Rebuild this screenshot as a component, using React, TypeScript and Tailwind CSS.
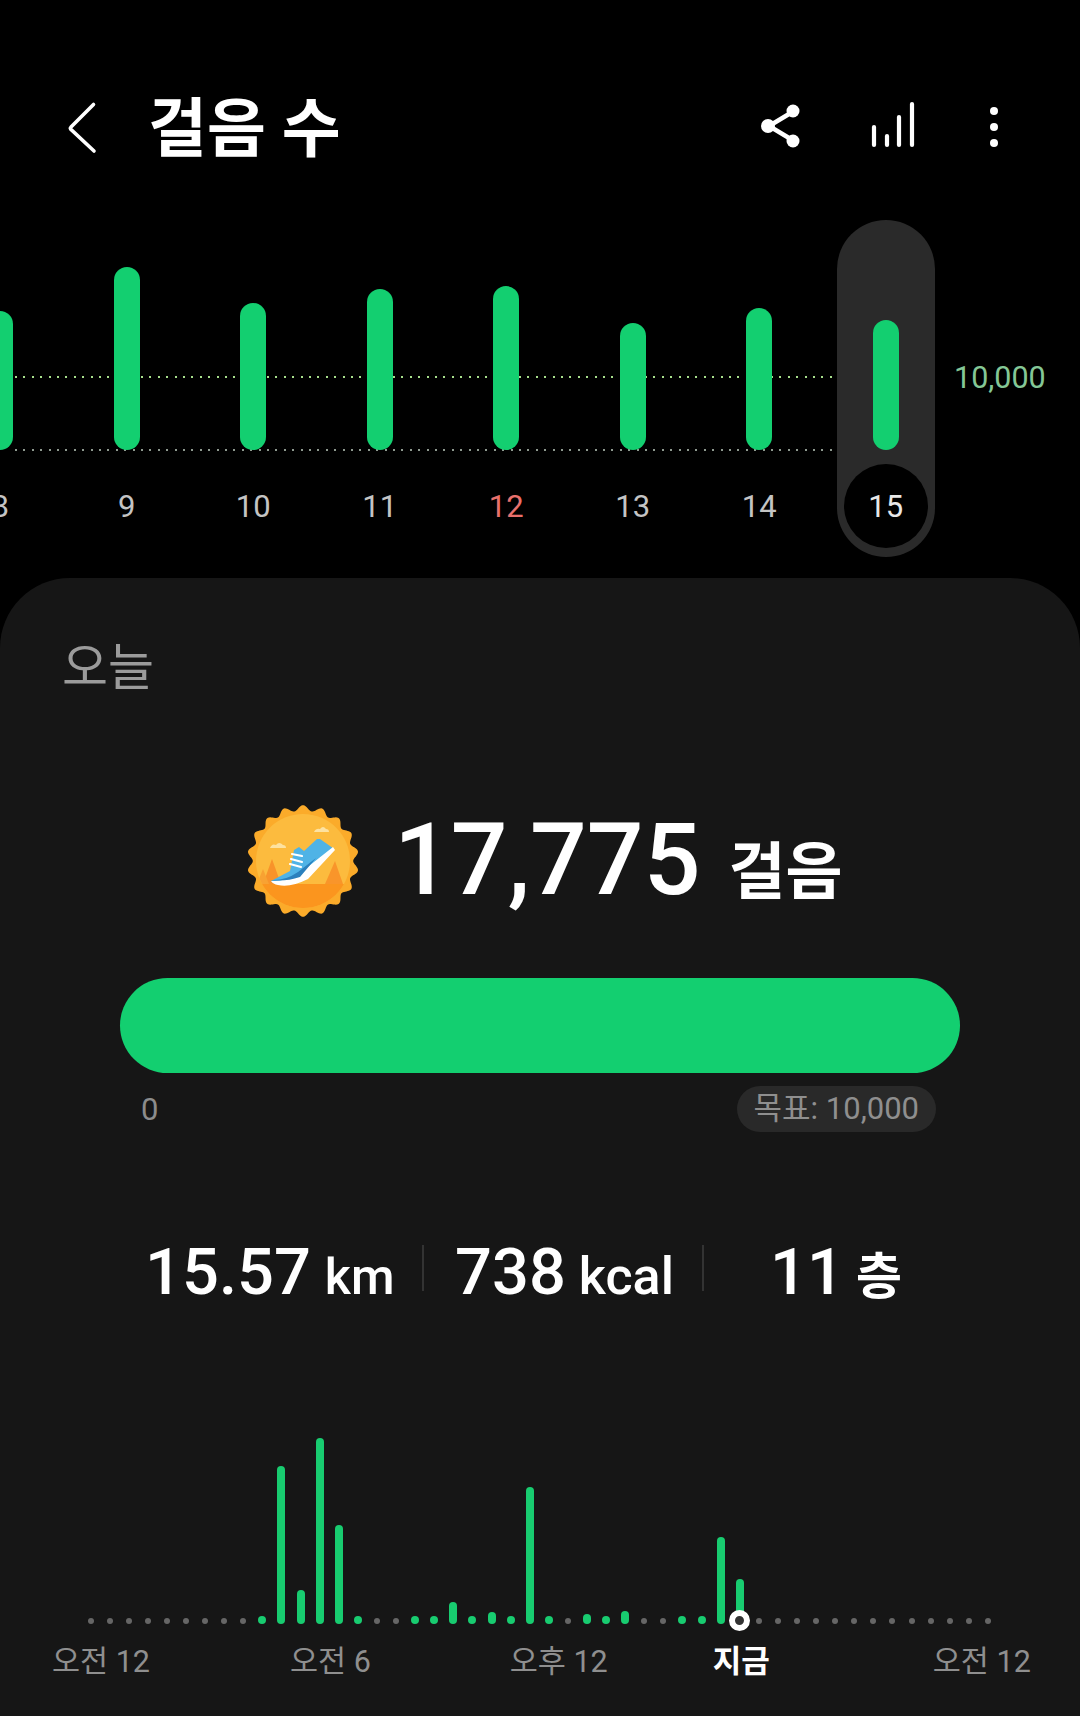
const days = [
  { label: '8', top: 311 },
  { label: '9', top: 267 },
  { label: '10', top: 303 },
  { label: '11', top: 289 },
  { label: '12', top: 286, red: true },
  { label: '13', top: 323 },
  { label: '14', top: 308 },
  { label: '15', top: 320, active: true },
];

// height in px of each half hour slot, 0 means no steps (grey dot)
const slots = [
  0, 0, 0, 0, 0, 0, 0, 0, 0, 8, 158, 34, 186, 99, 8, 0, 0, 8, 8, 22, 8, 12, 8, 137,
  8, 0, 10, 8, 13, 0, 0, 8, 8, 87, 45, 0, 0, 0, 0, 0, 0, 0, 0, 0, 0, 0, 0, 0,
];

const scallop = (() => {
  const cx = 73;
  const cy = 69;
  const n = 18;
  let d = '';
  for (let i = 0; i <= 360; i++) {
    const a = (i / 360) * Math.PI * 2;
    const r = 53 + 2.8 * Math.cos(a * n);
    d += `${i === 0 ? 'M' : 'L'}${(cx + r * Math.sin(a)).toFixed(2)} ${(cy - r * Math.cos(a)).toFixed(2)}`;
  }
  return d + 'Z';
})();

function Badge() {
  return (
    <svg width="150" height="130" viewBox="0 0 150 130" className="shrink-0 -ml-[16px] -mt-[11px] -mb-[6px]">
      <defs>
        <clipPath id="badge-inner">
          <circle cx="73" cy="69" r="47" />
        </clipPath>
      </defs>
      <path d={scallop} fill="#fbab2a" />
      <circle cx="73" cy="69" r="47" fill="#fcbb3e" />
      <g clipPath="url(#badge-inner)">
        <rect x="20" y="92" width="110" height="30" fill="#fb951e" />
        <path d="M42 67 L33 92 L51 92Z" fill="#f8932a" />
        <path d="M33 77 L27 92 L39 92Z" fill="#f8a232" />
        <path d="M105 69 L95 92 L113 92Z" fill="#f9952a" />
        <path d="M40 56 q2-5 6-3 q3-4 7 0 q3 0 3 3Z" fill="#fde2a0" />
        <path d="M84 40 q2-4 6-3 q3-4 6 0 q3 0 3 3Z" fill="#fde2a0" />
        <path d="M41 89 L60 79 L64 58 L69 55 L74 59 L87 47 L90 47 L100 54 L104 57 L95 68 L75 87 L55 92 Q45 93 41 89Z" fill="#4fb3e6" />
        <path d="M41 89 Q55 90 70 81 L103 55 L105 58 L78 87 Q60 96 48 93 Q43 92 41 89Z" fill="#ffffff" />
        <path d="M41 88 Q55 89 68 80 L86 66 L70 85 Q55 90 41 88Z" fill="#2b80bd" />
        <path d="M60 72 L71 75 M61 67 L72 70 M62 62 L72 64" stroke="#ffffff" strokeWidth="2.2" strokeLinecap="round" />
      </g>
    </svg>
  );
}

export default function App() {
  return (
    <div className="w-[1080px] h-[1716px] overflow-hidden bg-black font-['Roboto','Noto_Sans_CJK_KR',sans-serif] flex flex-col">
      {/* header */}
      <div className="h-[220px] shrink-0 flex items-start pt-[96px]">
        <svg width="36" height="60" viewBox="0 0 36 60" className="ml-[65px] mt-[1px] shrink-0">
          <path d="M28.5 7.5 L6 30 Q5 31 5.6 32 L29 54" fill="none" stroke="#fff" strokeWidth="3.6" strokeLinecap="round" />
        </svg>
        <div className="ml-[47px] mt-[2px] text-[64px] leading-[64px] font-bold text-white">걸음 수</div>
        <svg width="48" height="60" viewBox="0 0 48 60" className="ml-auto mt-[8px] shrink-0">
          <path d="M36 7 L11 22 L36 37" fill="none" stroke="#fff" strokeWidth="4.5" />
          <circle cx="35" cy="7" r="6.5" fill="#fff" />
          <circle cx="10" cy="22" r="7" fill="#fff" />
          <circle cx="35" cy="37" r="6.5" fill="#fff" />
        </svg>
        <svg width="48" height="60" viewBox="0 0 48 60" className="ml-[62px] -mt-[2px] shrink-0">
          <g stroke="#fff" strokeWidth="4.2" strokeLinecap="round">
            <path d="M6 33 V51" />
            <path d="M19 42 V51" />
            <path d="M31 23 V51" />
            <path d="M44 10 V51" />
          </g>
        </svg>
        <svg width="12" height="50" viewBox="0 0 12 50" className="ml-[72px] mr-[80px] mt-[8px] shrink-0">
          <circle cx="6" cy="7" r="4" fill="#fff" />
          <circle cx="6" cy="23" r="4" fill="#fff" />
          <circle cx="6" cy="39" r="4" fill="#fff" />
        </svg>
      </div>

      {/* daily bars */}
      <div className="relative h-[358px] shrink-0 flex items-start -ml-[63px]">
        <div className="absolute left-[78px] top-[156px] w-[825px] h-[2px] bg-[repeating-linear-gradient(90deg,#a8e08c_0_2px,transparent_2px_8.4px)]" />
        <div className="absolute left-[78px] top-[229px] w-[825px] h-[2px] bg-[repeating-linear-gradient(90deg,#8f9a90_0_2px,transparent_2px_8.4px)]" />
        {days.map((d) => (
          <div key={d.label} className="relative w-[126.5px] shrink-0 flex justify-center">
            <div className={`w-[98px] h-[337px] flex flex-col items-center rounded-full ${d.active ? 'bg-[#2a2a2a]' : ''}`}>
              <div className="h-[230px] flex items-end">
                <div className="w-[26px] rounded-full bg-[#13cf70]" style={{ height: 450 - d.top }} />
              </div>
              <div
                className={`mt-[14px] w-[84px] h-[84px] rounded-full flex items-center justify-center text-[31px] leading-none ${
                  d.active ? 'bg-black text-[#e8e8e8]' : d.red ? 'text-[#e8706c]' : 'text-[#c4c4c4]'
                }`}
              >
                {d.label}
              </div>
            </div>
          </div>
        ))}
        <div className="ml-[5px] mt-[139px] text-[30.5px] leading-[38px] text-[#84c796] shrink-0">10,000</div>
      </div>

      {/* today card */}
      <div className="flex-1 bg-[#161616] rounded-t-[70px] flex flex-col">
        <div className="mt-[62px] ml-[62px] text-[50px] leading-[56px] text-[#9b9b9b]">오늘</div>

        <div className="mt-[107px] ml-[246px] h-[113px] flex items-center">
          <Badge />
          <div className="ml-[14px] flex items-baseline text-white">
            <span className="text-[100px] leading-[113px] font-medium">17,775</span>
            <span className="ml-[28px] text-[62px] leading-none font-bold">걸음</span>
          </div>
        </div>

        <div className="mt-[62px] mx-[120px] h-[95px] rounded-full bg-[#13cf70]" />

        <div className="mt-[13px] pl-[141px] pr-[144px] h-[46px] flex items-center justify-between">
          <span className="text-[31px] text-[#8c8c8c] translate-y-[1px]">0</span>
          <span className="h-[46px] px-[17px] rounded-full bg-[#292929] flex items-center text-[31px] text-[#8f8f8f] whitespace-nowrap">목표: 10,000</span>
        </div>

        <div className="mt-[100px] ml-[145px] h-[80px] flex items-center text-white">
          <div className="w-[277px] flex items-baseline">
            <span className="text-[65px] leading-[80px] font-medium">15.57</span>
            <span className="ml-[14px] text-[50px] leading-none font-medium">km</span>
          </div>
          <div className="w-[2px] h-[46px] bg-[#333333] -mt-[8px]" />
          <div className="ml-[31px] w-[247px] flex items-baseline">
            <span className="text-[65px] leading-[80px] font-medium">738</span>
            <span className="ml-[13px] text-[52px] leading-none font-medium">kcal</span>
          </div>
          <div className="w-[2px] h-[46px] bg-[#333333] -mt-[8px]" />
          <div className="ml-[66px] flex items-baseline">
            <span className="text-[65px] leading-[80px] font-medium">11</span>
            <span className="ml-[12px] text-[50px] leading-none font-bold">층</span>
          </div>
        </div>

        {/* hourly steps */}
        <div className="mt-[126px] ml-[81px] h-[186px] flex items-end">
          {slots.map((h, i) => (
            <div key={i} className="relative w-[19.1px] shrink-0 flex justify-center">
              {h > 0 ? (
                <div className="w-[8px] rounded-full bg-[#18cc70]" style={{ height: h }} />
              ) : (
                <div className="w-[6px] h-[6px] rounded-full bg-[#666666]" />
              )}
              {i === 34 && (
                <div className="absolute left-[-1px] bottom-[-7px] w-[21px] h-[21px] rounded-full bg-[#333333] border-[6px] border-white" />
              )}
            </div>
          ))}
        </div>

        <div className="mt-[18px] ml-[52px] flex items-center text-[30.5px] leading-[40px] text-[#8f8f8f] whitespace-nowrap">
          <span>오전 12</span>
          <span className="ml-[140px]">오전 6</span>
          <span className="ml-[139px]">오후 12</span>
          <span className="ml-[105px] text-[31px] font-bold text-white">지금</span>
          <span className="ml-[163px]">오전 12</span>
        </div>
      </div>
    </div>
  );
}
